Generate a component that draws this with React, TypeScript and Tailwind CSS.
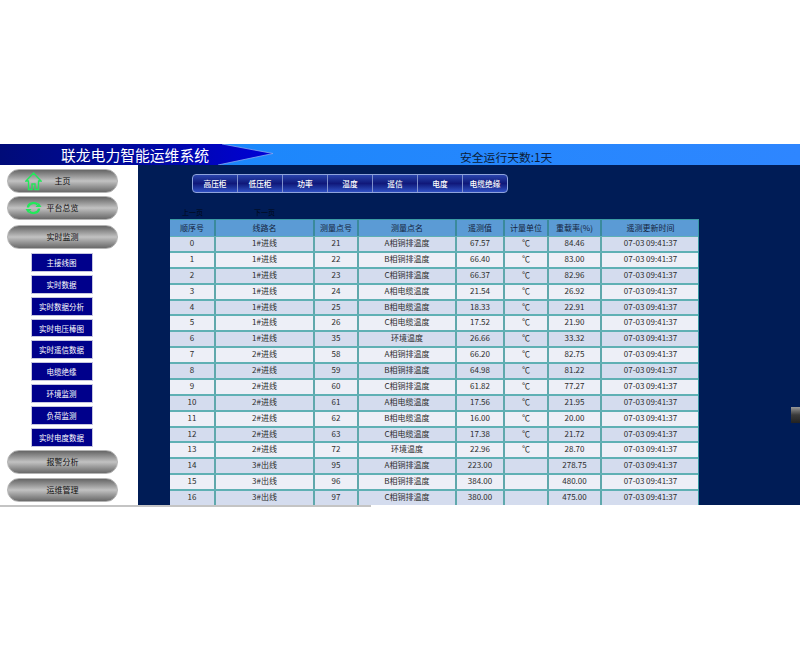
const font = { fontFamily: '"Noto Sans CJK SC", "Liberation Sans", sans-serif' };

const cols = ["w-[46px]", "w-[99px]", "w-[44px]", "w-[98px]", "w-[48px]", "w-[44px]", "w-[53px]", "w-[97px]"];
const heads = ["顺序号", "线路名", "测量点号", "测量点名", "遥测值", "计量单位", "重载率(%)", "遥测更新时间"];
const rows: string[][] = [
  ["0", "1#进线", "21", "A相铜排温度", "67.57", "℃", "84.46"],
  ["1", "1#进线", "22", "B相铜排温度", "66.40", "℃", "83.00"],
  ["2", "1#进线", "23", "C相铜排温度", "66.37", "℃", "82.96"],
  ["3", "1#进线", "24", "A相电缆温度", "21.54", "℃", "26.92"],
  ["4", "1#进线", "25", "B相电缆温度", "18.33", "℃", "22.91"],
  ["5", "1#进线", "26", "C相电缆温度", "17.52", "℃", "21.90"],
  ["6", "1#进线", "35", "环境温度", "26.66", "℃", "33.32"],
  ["7", "2#进线", "58", "A相铜排温度", "66.20", "℃", "82.75"],
  ["8", "2#进线", "59", "B相铜排温度", "64.98", "℃", "81.22"],
  ["9", "2#进线", "60", "C相铜排温度", "61.82", "℃", "77.27"],
  ["10", "2#进线", "61", "A相电缆温度", "17.56", "℃", "21.95"],
  ["11", "2#进线", "62", "B相电缆温度", "16.00", "℃", "20.00"],
  ["12", "2#进线", "63", "C相电缆温度", "17.38", "℃", "21.72"],
  ["13", "2#进线", "72", "环境温度", "22.96", "℃", "28.70"],
  ["14", "3#出线", "95", "A相铜排温度", "223.00", "", "278.75"],
  ["15", "3#出线", "96", "B相铜排温度", "384.00", "", "480.00"],
  ["16", "3#出线", "97", "C相铜排温度", "380.00", "", "475.00"],
];
const tabs = ["高压柜", "低压柜", "功率", "温度", "遥信", "电度", "电缆绝缘"];
const subs = ["主接线图", "实时数据", "实时数据分析", "实时电压棒图", "实时遥信数据", "电缆绝缘", "环境监测", "负荷监测", "实时电度数据"];

function Pill({ label, icon, mt = "mt-0" }: { label: string; icon?: React.ReactNode; mt?: string }) {
  return (
    <div className={`relative h-6 w-[111px] ml-[7px] ${mt} rounded-full border border-[#b4b4b4] bg-gradient-to-b from-[#666] via-[#c2c2c2] to-[#6a6a6a] flex items-center justify-center text-[8px] leading-none text-[#0c0c0c]`}>
      {icon}
      {label}
    </div>
  );
}

function Home() {
  return (
    <svg className="absolute left-[17px] top-[2px]" width="17" height="19" viewBox="0 0 17 19" fill="none" stroke="#22e85a" strokeWidth="1.4">
      <path d="M8.5 1 L16 9 H13.5 V17.5 H10 V12 H7 V17.5 H3.5 V9 H1 Z" />
    </svg>
  );
}
function Sync() {
  return (
    <svg className="absolute left-[17px] top-[4px]" width="17" height="14" viewBox="0 0 17 14" fill="none" stroke="#22e85a" strokeWidth="2.4">
      <path d="M3 6.5 A5.5 4.6 0 0 1 12.5 3.4" />
      <path d="M14 7.5 A5.5 4.6 0 0 1 4.5 10.6" />
      <path d="M10.5 6 L16.5 6 L13.8 2 Z M6.5 8 L0.5 8 L3.2 12 Z" fill="#22e85a" stroke="none" />
    </svg>
  );
}

export default function App() {
  return (
    <div className="w-[800px] h-[650px] bg-white overflow-hidden flex flex-col" style={font}>
      <div className="h-[144px] shrink-0" />
      <header className="h-[21px] shrink-0 flex items-stretch bg-gradient-to-r from-[#0e88fa] to-[#2e86ff] relative">
        <svg className="absolute left-0 top-0" width="274" height="21" viewBox="0 0 274 21">
          <defs>
            <linearGradient id="nav" x1="0" x2="1" y1="0" y2="0">
              <stop offset="0" stopColor="#000b78" />
              <stop offset="0.6" stopColor="#0008a8" />
              <stop offset="1" stopColor="#0000d8" />
            </linearGradient>
          </defs>
          <polygon points="0,0 222,0 273,9.5 218,21 0,21" fill="url(#nav)" />
          <polyline points="222,0 273,9.5 218,21" fill="none" stroke="#86a8ee" strokeWidth="0.8" />
        </svg>
        <div className="relative ml-[61px] w-[399px] text-[14.8px] leading-[21px] text-white">联龙电力智能运维系统</div>
        <div className="relative text-[11.8px] leading-[26px] text-[#0b1c38]">安全运行天数:1天</div>
      </header>
      <div className="h-[340px] shrink-0 flex overflow-hidden">
        <aside className="w-[138px] shrink-0 bg-white pt-[4px] flex flex-col">
          <Pill label="主页" icon={<Home />} />
          <Pill label="平台总览" icon={<Sync />} mt="mt-[3px]" />
          <Pill label="实时监测" mt="mt-[5px]" />
          <div className="mt-[4px] flex flex-col gap-[3px] items-center w-[123px]">
            {subs.map((s) => (
              <div key={s} className="w-[62px] h-[18.85px] bg-[#00008b] border border-[#c6c6e0] text-white text-[7.5px] leading-[17px] text-center whitespace-nowrap">{s}</div>
            ))}
          </div>
          <Pill label="报警分析" mt="mt-[3px]" />
          <Pill label="运维管理" mt="mt-[4px]" />
        </aside>
        <main className="relative flex-1 bg-[#001c56] pl-[32px] overflow-hidden">
          <nav className="ml-[22px] mt-[9px] w-[316px] h-[19px] flex rounded-[4px] border border-[#8fa4dc] bg-gradient-to-b from-[#2a44ac] via-[#10187a] to-[#3050c4]">
            {tabs.map((t, i) => (
              <div key={t} className={`flex-1 text-center font-medium text-white text-[7.7px] leading-[17px] whitespace-nowrap ${i ? "border-l border-[#7f90cc]" : ""}`}>{t}</div>
            ))}
          </nav>
          <div className="h-[26px] flex items-end text-[7px] leading-none text-[#000814] pb-[3px]">
            <span className="ml-[12px] w-[72px]">上一页</span>
            <span>下一页</span>
          </div>
          <div className="w-[529px] border-r border-[#3a9aa4]">
            <div className="flex h-[17px] bg-[#5b9bd5] border-t border-[#3a9aa4]">
              {heads.map((h, i) => (
                <div key={h} className={`${cols[i]} shrink-0 border-r-2 border-[#3a8a9c] text-center text-[8px] leading-[16px] text-[#14233c] whitespace-nowrap last:border-r-0`}>{h}</div>
              ))}
            </div>
            {rows.map((r, ri) => (
              <div key={ri} className={`flex h-[15.875px] border-t border-b border-[#5fb0b4] ${ri % 2 ? "bg-[#edeff7]" : "bg-[#d4dcee]"}`}>
                {[...r, "07-03 09:41:37"].map((c, i) => (
                  <div key={i} className={`${cols[i]} shrink-0 border-r-2 border-[#5fa8ac] text-center text-[8px] leading-[12.5px] text-[#2c2c2c] whitespace-nowrap last:border-r-0`}>{c}</div>
                ))}
              </div>
            ))}
          </div>
          <div className="absolute right-0 top-[242px] w-[9px] h-[16px] bg-gradient-to-b from-[#9a9a9a] via-[#3a3a3a] to-[#222]" />
        </main>
      </div>
      <div className="h-[2px] w-[371px] shrink-0 bg-[#c4c4c4]" />
    </div>
  );
}
